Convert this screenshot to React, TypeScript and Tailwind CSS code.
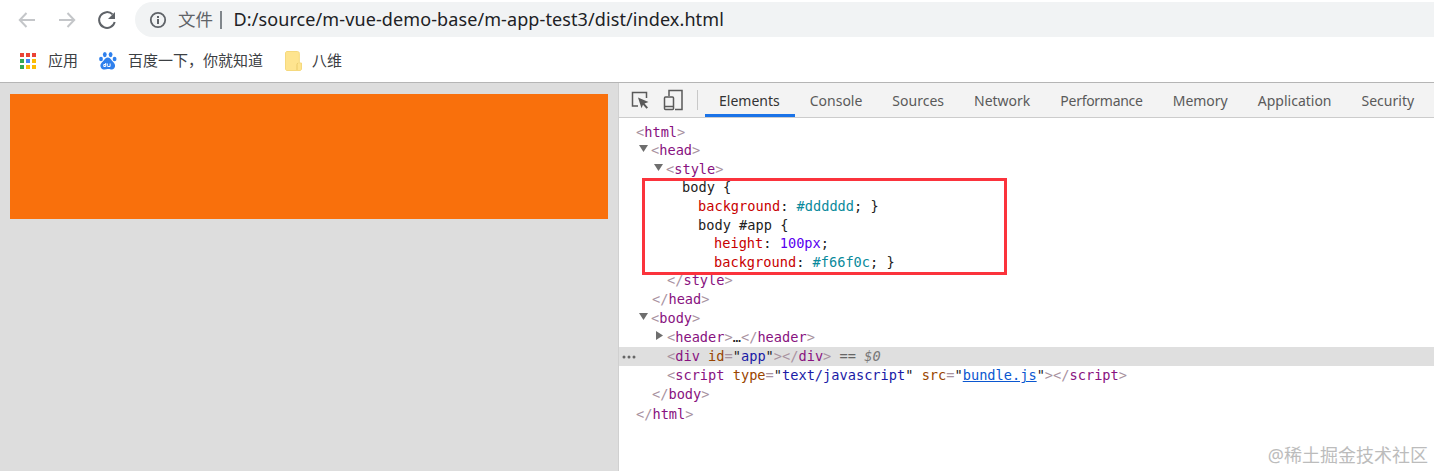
const mono = "font-['DejaVu_Sans_Mono',monospace]";

const Br = ({ children }: { children: React.ReactNode }) => <span className="text-[#a8929f]">{children}</span>;
const Tag = ({ children }: { children: React.ReactNode }) => <span className="text-[#881280]">{children}</span>;
const Css = ({ children }: { children: React.ReactNode }) => <span className="text-[#c80000]">{children}</span>;
const Val = ({ children }: { children: React.ReactNode }) => <span className="text-[#0a8a9c]">{children}</span>;
const Attr = ({ children }: { children: React.ReactNode }) => <span className="text-[#994500]">{children}</span>;
const Str = ({ children }: { children: React.ReactNode }) => <span className="text-[#1a1aa6]">{children}</span>;

function Row({ pad, arrow, selected, tall, children }: { pad: string; arrow?: "down" | "right"; selected?: boolean; tall?: boolean; children: React.ReactNode }) {
  return (
    <div className={`relative whitespace-pre ${tall ? "h-[19.2px] leading-[19.2px]" : "h-[18.6px] leading-[18.6px]"} ${pad} ${selected ? "bg-[#dfdfdf]" : ""}`}>
      {arrow && (
        <svg width="9" height="9" viewBox="0 0 9 9" className="absolute top-[3px] -ml-[12px]">
          <path d={arrow === "down" ? "M0 1h9L4.500 8z" : "M1 0v9l7-4.500z"} fill="#6e6e6e" />
        </svg>
      )}
      {selected && (
        <svg width="14" height="4" viewBox="0 0 14 4" className="absolute left-[3px] top-[8px]">
          <circle cx="2" cy="2" r="1.500" fill="#666" />
          <circle cx="7" cy="2" r="1.500" fill="#666" />
          <circle cx="12" cy="2" r="1.500" fill="#666" />
        </svg>
      )}
      {children}
    </div>
  );
}

function AppsIcon() {
  const colors = ["#ea4335", "#ea4335", "#ea4335", "#34a853", "#4285f4", "#fbbc05", "#34a853", "#fbbc05", "#fbbc05"];
  return (
    <div className="grid h-[16px] w-[16px] grid-cols-3 gap-[2px]">
      {colors.map((c, i) => (
        <span key={i} className="block" style={{ background: c }} />
      ))}
    </div>
  );
}

function BaiduIcon() {
  return (
    <svg width="18" height="20" viewBox="0 0 18 20">
      <ellipse cx="5.800" cy="3.600" rx="1.900" ry="2.600" fill="#2f80ed" />
      <ellipse cx="11.600" cy="3.600" rx="1.900" ry="2.600" fill="#2f80ed" />
      <ellipse cx="2" cy="8" rx="1.900" ry="2.300" fill="#2f80ed" />
      <ellipse cx="15.600" cy="8" rx="1.900" ry="2.300" fill="#2f80ed" />
      <path d="M8.800 6.500c2 0 3 1.500 4 3 1.200 1.500 3.700 3 3.200 6-.4 2.500-2.500 3-4 3-1.300 0-2-.4-3.200-.4s-2 .4-3.300.4c-1.500 0-3.600-.5-4-3-.5-3 2-4.500 3.200-6 1-1.500 2.100-3 4.100-3z" fill="#2f80ed" />
      <path d="M6.700 12v3.500H4.800v-2h1.900M8.300 12.500v2.300c0 .5.300.7.800.7h2v-3" fill="none" stroke="#fff" strokeWidth="1" />
    </svg>
  );
}

function FolderIcon() {
  return (
    <svg width="17" height="20" viewBox="0 0 17 20">
      <path d="M2 .5h10.500c1 0 1.800.8 1.800 1.800V12h2.200v6c0 .8-.7 1.500-1.500 1.500H2c-.8 0-1.500-.7-1.500-1.500V2C.5 1.200 1.200.5 2 .5z" fill="#fee48f" stroke="#f5d97e" />
      <path d="M12 19v-5.500c0-.8.500-1.300 1.200-1.300" fill="none" stroke="#e9c968" />
    </svg>
  );
}

const tabs = ["Console", "Sources", "Network", "Performance", "Memory", "Application", "Security"];

export default function App() {
  return (
    <div className="relative flex h-[471px] w-[1434px] flex-col overflow-hidden bg-white font-['Noto_Sans','Noto_Sans_CJK_SC',sans-serif]">
      {/* browser toolbar */}
      <div className="flex h-[39px] items-center pl-[17px]">
        <svg width="20" height="20" viewBox="0 0 20 20" fill="none" stroke="#c4c6c9" strokeWidth="2" className="mr-[20px]">
          <path d="M18 10H3M9.500 3 2.800 10l6.700 7" />
        </svg>
        <svg width="20" height="20" viewBox="0 0 20 20" fill="none" stroke="#c4c6c9" strokeWidth="2" className="mr-[20px]">
          <path d="M2 10h15M10.500 3l6.700 7-6.700 7" />
        </svg>
        <svg width="20" height="20" viewBox="0 0 20 20" className="mr-[18px]">
          <path d="M15.600 4.400A7.900 7.900 0 1 0 17.700 12" fill="none" stroke="#5f6368" strokeWidth="2" />
          <path d="M18 2v7h-7z" fill="#5f6368" />
        </svg>
        <div className="flex h-[35px] flex-1 items-center rounded-l-full bg-[#f1f3f4] pl-[14px]">
          <svg width="18" height="18" viewBox="0 0 18 18" className="mr-[11px]">
            <circle cx="9" cy="9" r="7.200" fill="none" stroke="#5f6368" strokeWidth="1.800" />
            <path d="M8 8h2v5H8zM8 5h2v2H8z" fill="#5f6368" />
          </svg>
          <span className="text-[17.500px] text-[#5f6368]">文件</span>
          <span className="ml-[7px] mr-[12px] h-[18px] w-[1.500px] bg-[#80868b]" />
          <span className="text-[18px] tracking-[0.1px] text-[#202124]">D:/source/m-vue-demo-base/m-app-test3/dist/index.html</span>
        </div>
      </div>

      {/* bookmarks */}
      <div className="flex h-[44px] items-center border-b border-[#b5b5b5] pl-[20px] text-[15px] text-[#3c4043]">
        <AppsIcon />
        <span className="ml-[12px]">应用</span>
        <span className="ml-[21px]"><BaiduIcon /></span>
        <span className="ml-[11px]">百度一下，你就知道</span>
        <span className="ml-[22px]"><FolderIcon /></span>
        <span className="ml-[10px]">八维</span>
      </div>

      <div className="flex flex-1">
        {/* page */}
        <div className="w-[618px] shrink-0 bg-[#dddddd] p-[11px_10px]">
          <div className="h-[125px] bg-[#f9700c]" />
        </div>

        {/* devtools */}
        <div className="min-w-0 flex-1 border-l border-[#d0d0d0]">
          <div className="flex h-[35px] items-center border-b border-[#cccccc] bg-[#f3f3f3]">
            <svg width="20" height="20" viewBox="0 0 20 20" fill="none" className="ml-[11px] shrink-0">
              <path d="M8 16H2.500V2.500h14V8" stroke="#5a5a5a" strokeWidth="1.500" />
              <path d="M8 7.500 18.500 12l-4 1.500 3.500 4-1.500 1.300-3.500-4-1.500 3.500z" fill="#5a5a5a" />
            </svg>
            <svg width="20" height="22" viewBox="0 0 20 22" fill="none" stroke="#5a5a5a" strokeWidth="1.500" className="ml-[13px] shrink-0">
              <path d="M6 7V1.500h13v19H12" />
              <rect x="1.500" y="8" width="9" height="12.500" rx="1" />
              <path d="M1.500 17.500h9" />
            </svg>
            <span className="ml-[14px] mr-[7px] h-[20px] w-px shrink-0 bg-[#c8c8c8]" />
            <div className="flex h-full">
              <div className="flex h-full items-center border-b-[3px] border-[#1a73e8] pl-[14px] pr-[15px] pt-[3px] text-[14px] text-[#333]">Elements</div>
              {tabs.map((t) => (
                <div key={t} className={`flex h-full items-center whitespace-nowrap px-[15px] text-[14px] text-[#5a5a5a] ${t === "Performance" ? "tracking-[-0.28px]" : ""}`}>{t}</div>
              ))}
            </div>
          </div>

          <div className={`${mono} pt-[4.700px] text-[13.650px] text-[#222]`}>
            <Row pad="pl-[17px]"><Br>&lt;</Br><Tag>html</Tag><Br>&gt;</Br></Row>
            <Row pad="pl-[32px]" arrow="down"><Br>&lt;</Br><Tag>head</Tag><Br>&gt;</Br></Row>
            <Row pad="pl-[47px]" arrow="down"><Br>&lt;</Br><Tag>style</Tag><Br>&gt;</Br></Row>
            <Row pad="pl-[63px]">body {"{"}</Row>
            <Row pad="pl-[79px]"><Css>background</Css>: <Val>#dddddd</Val>; {"}"}</Row>
            <Row pad="pl-[79px]">body #app {"{"}</Row>
            <Row pad="pl-[95px]"><Css>height</Css>: <span className="text-[#5a00f0]">100px</span>;</Row>
            <Row pad="pl-[95px]"><Css>background</Css>: <Val>#f66f0c</Val>; {"}"}</Row>
            <Row pad="pl-[48px]"><Br>&lt;/</Br><Tag>style</Tag><Br>&gt;</Br></Row>
            <Row pad="pl-[33px]"><Br>&lt;/</Br><Tag>head</Tag><Br>&gt;</Br></Row>
            <Row tall pad="pl-[32px]" arrow="down"><Br>&lt;</Br><Tag>body</Tag><Br>&gt;</Br></Row>
            <Row tall pad="pl-[48px]" arrow="right"><Br>&lt;</Br><Tag>header</Tag><Br>&gt;</Br>…<Br>&lt;/</Br><Tag>header</Tag><Br>&gt;</Br></Row>
            <Row tall pad="pl-[48px]" selected><Br>&lt;</Br><Tag>div</Tag> <Attr>id</Attr><Br>=</Br>"<Str>app</Str>"<Br>&gt;&lt;/</Br><Tag>div</Tag><Br>&gt;</Br><span className="text-[#666]"> == </span><span className="italic text-[#777]">$0</span></Row>
            <Row tall pad="pl-[48px]"><Br>&lt;</Br><Tag>script</Tag> <Attr>type</Attr><Br>=</Br>"<Str>text/javascript</Str>" <Attr>src</Attr><Br>=</Br>"<span className="text-[#0b57d0] underline">bundle.js</span>"<Br>&gt;&lt;/</Br><Tag>script</Tag><Br>&gt;</Br></Row>
            <Row tall pad="pl-[33px]"><Br>&lt;/</Br><Tag>body</Tag><Br>&gt;</Br></Row>
            <Row tall pad="pl-[17px]"><Br>&lt;/</Br><Tag>html</Tag><Br>&gt;</Br></Row>
          </div>
        </div>
      </div>

      {/* annotation drawn over the screenshot */}
      <div className="absolute left-[642px] top-[178px] h-[97px] w-[365px] border-[3px] border-[#fb333c]" />
      <div className="absolute right-[6px] top-[442px] text-[18px] text-[#bcbcbc]">@稀土掘金技术社区</div>
    </div>
  );
}
